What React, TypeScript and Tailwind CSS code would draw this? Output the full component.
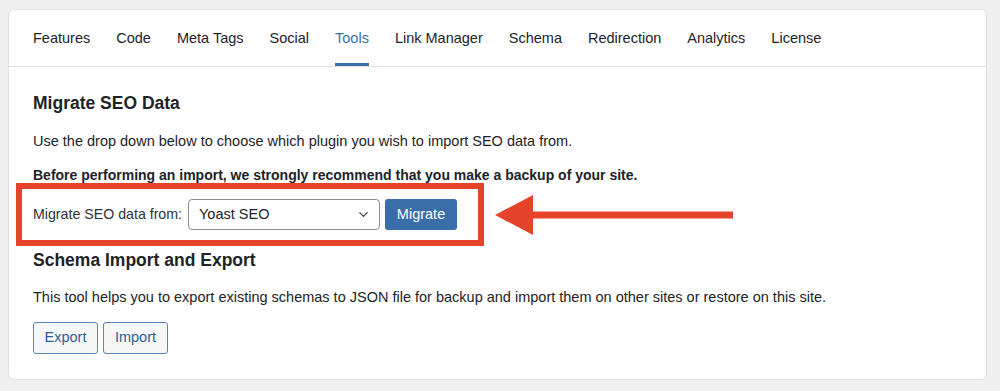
import { ChevronDown } from "lucide-react";

const tabs = [
  "Features",
  "Code",
  "Meta Tags",
  "Social",
  "Tools",
  "Link Manager",
  "Schema",
  "Redirection",
  "Analytics",
  "License",
];

function Tabs({ active }: { active: string }) {
  return (
    <nav className="flex h-[57px] gap-[26px] border-b border-[#e2e4e7] pl-[24px]">
      {tabs.map((t) => (
        <a
          key={t}
          className={
            t === active
              ? "flex items-center border-b-[3px] border-[#3b6ea6] pt-[4px] text-[14.5px] text-[#3b6ea6]"
              : "flex items-center border-b-[3px] border-transparent pt-[4px] text-[14.5px] text-[#1d2327]"
          }
        >
          {t}
        </a>
      ))}
    </nav>
  );
}

function Arrow() {
  return (
    <svg width="242" height="44" viewBox="0 0 242 44" className="ml-[9px] shrink-0">
      <polygon points="2,22 40,2 40,42" fill="#e5432b" />
      <rect x="38" y="18.5" width="202" height="7" fill="#e5432b" />
    </svg>
  );
}

export default function App() {
  return (
    <div
      className="h-[391px] w-[1000px] bg-[#f0f0f1] pl-[8px] pt-[9px] text-[#1d2327]"
      style={{ fontFamily: '"Liberation Sans", Arial, sans-serif' }}
    >
      <div className="h-[371px] w-[979px] rounded-[6px] border border-[#e1e1e1] bg-white">
        <Tabs active="Tools" />

        <div className="px-[24px]">
          <h2 className="mt-[25px] text-[17.5px] font-semibold leading-[22px]">Migrate SEO Data</h2>
          <p className="mt-[17px] text-[14.5px] leading-[20px]">
            Use the drop down below to choose which plugin you wish to import SEO data from.
          </p>
          <p className="mt-[14px] text-[14px] font-semibold leading-[20px]">
            Before performing an import, we strongly recommend that you make a backup of your site.
          </p>

          <div className="-ml-[17px] -mt-[2px] flex items-center">
            <div className="flex h-[63px] w-[468px] items-center border-[6px] border-[#e5432b] pl-[11px]">
              <label className="text-[14.2px] text-[#2c3338]">Migrate SEO data from:</label>
              <div className="ml-[6px] flex h-[31px] w-[192px] items-center justify-between rounded-[4px] border border-[#8c8f94] bg-white pl-[10px] pr-[8px] text-[14.5px]">
                <span>Yoast SEO</span>
                <ChevronDown size={15} strokeWidth={2} className="text-[#3c434a]" />
              </div>
              <button className="ml-[5px] h-[31px] w-[72px] rounded-[3px] bg-[#3a6ea8] text-[14.5px] text-white">
                Migrate
              </button>
            </div>
            <Arrow />
          </div>

          <h2 className="mt-[3px] text-[17.5px] font-semibold leading-[22px]">Schema Import and Export</h2>
          <p className="mt-[16px] text-[14.5px] leading-[20px]">
            This tool helps you to export existing schemas to JSON file for backup and import them on other sites or
            restore on this site.
          </p>
          <div className="mt-[15px] flex gap-[5px]">
            <button className="h-[32px] w-[65px] rounded-[3px] border border-[#5b84b1] bg-[#f6f7f7] text-[14.5px] text-[#2e5f93]">
              Export
            </button>
            <button className="h-[32px] w-[65px] rounded-[3px] border border-[#5b84b1] bg-[#f6f7f7] text-[14.5px] text-[#2e5f93]">
              Import
            </button>
          </div>
        </div>
      </div>
    </div>
  );
}
